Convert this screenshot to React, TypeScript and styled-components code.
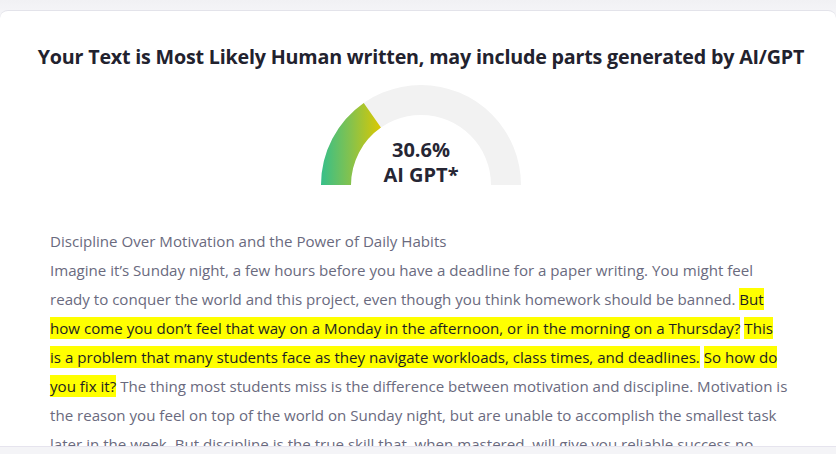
import React from "react";
import styled, { createGlobalStyle } from "styled-components";

const Global = createGlobalStyle`
  html, body { margin: 0; padding: 0; }
  body {
    width: 836px;
    height: 454px;
    overflow: hidden;
    background: #f4f4f7;
    font-family: "Open Sans", "Noto Sans", sans-serif;
  }
`;

const Page = styled.div`
  display: flex;
  flex-direction: column;
  height: 454px;
  padding-top: 10px;
  box-sizing: border-box;
  background: linear-gradient(#f1f1f4, #f4f4f7 10px);
`;

const Card = styled.section`
  background: #ffffff;
  border-top: 1px solid #e3e3ea;
  border-bottom: 1px solid #e6e4ee;
  border-radius: 8px 8px 0 0;
  height: 437px;
  overflow: hidden;
  display: flex;
  flex-direction: column;
  align-items: center;
  padding-top: 32px;
  box-sizing: border-box;
`;

const Title = styled.h1`
  margin: 0 0 0 6px;
  font-size: 19.7px;
  line-height: 28px;
  font-weight: 700;
  color: #22222e;
  letter-spacing: -0.2px;
  white-space: nowrap;
`;

const GaugeWrap = styled.div`
  position: relative;
  width: 200px;
  height: 100px;
  margin: 14px 0 0 6px;
`;

const GaugeLabel = styled.div`
  position: absolute;
  left: 0;
  right: 0;
  top: 52px;
  text-align: center;
  font-size: 20px;
  line-height: 25px;
  font-weight: 700;
  color: #262634;
`;

const Body = styled.div`
  align-self: stretch;
  margin: 42px 0 0 50px;
  font-size: 15.1px;
  line-height: 29px;
  color: #6a6a7e;
  white-space: nowrap;
`;

const Hl = styled.span`
  background: #ffff00;
  color: #1e1e22;
  padding: 1px 0;
`;

const Gauge: React.FC<{ pct: number }> = ({ pct }) => {
  const a = (pct / 100) * Math.PI;
  const ox = 100 - 100 * Math.cos(a);
  const oy = 100 - 100 * Math.sin(a);
  const ix = 100 - 70 * Math.cos(a);
  const iy = 100 - 70 * Math.sin(a);
  return (
    <svg width="200" height="100" viewBox="0 0 200 100">
      <defs>
        <linearGradient id="g" x1="0" y1="0" x2="60" y2="0" gradientUnits="userSpaceOnUse">
          <stop offset="0" stopColor="#36bf8a" />
          <stop offset="0.5" stopColor="#86c24c" />
          <stop offset="1" stopColor="#dcc800" />
        </linearGradient>
      </defs>
      <path d="M0 100 A100 100 0 0 1 200 100 L170 100 A70 70 0 0 0 30 100 Z" fill="#f2f2f2" />
      <path
        d={`M0 100 A100 100 0 0 1 ${ox} ${oy} L${ix} ${iy} A70 70 0 0 0 30 100 Z`}
        fill="url(#g)"
      />
    </svg>
  );
};

export default function App() {
  return (
    <>
      <Global />
      <Page>
        <Card>
          <Title>Your Text is Most Likely Human written, may include parts generated by AI/GPT</Title>
          <GaugeWrap>
            <Gauge pct={30.6} />
            <GaugeLabel>
              30.6%
              <br />
              AI GPT*
            </GaugeLabel>
          </GaugeWrap>
          <Body>
            Discipline Over Motivation and the Power of Daily Habits
            <br />
            Imagine it’s Sunday night, a few hours before you have a deadline for a paper writing. You might feel
            <br />
            ready to conquer the world and this project, even though you think homework should be banned.{" "}
            <Hl>
              But
              <br />
              how come you don’t feel that way on a Monday in the afternoon, or in the morning on a Thursday?
            </Hl>{" "}
            <Hl>
              This
              <br />
              is a problem that many students face as they navigate workloads, class times, and deadlines.
            </Hl>{" "}
            <Hl>
              So how do
              <br />
              you fix it?
            </Hl>{" "}
            The thing most students miss is the difference between motivation and discipline. Motivation is
            <br />
            the reason you feel on top of the world on Sunday night, but are unable to accomplish the smallest task
            <br />
            later in the week. But discipline is the true skill that, when mastered, will give you reliable success no
          </Body>
        </Card>
      </Page>
    </>
  );
}
